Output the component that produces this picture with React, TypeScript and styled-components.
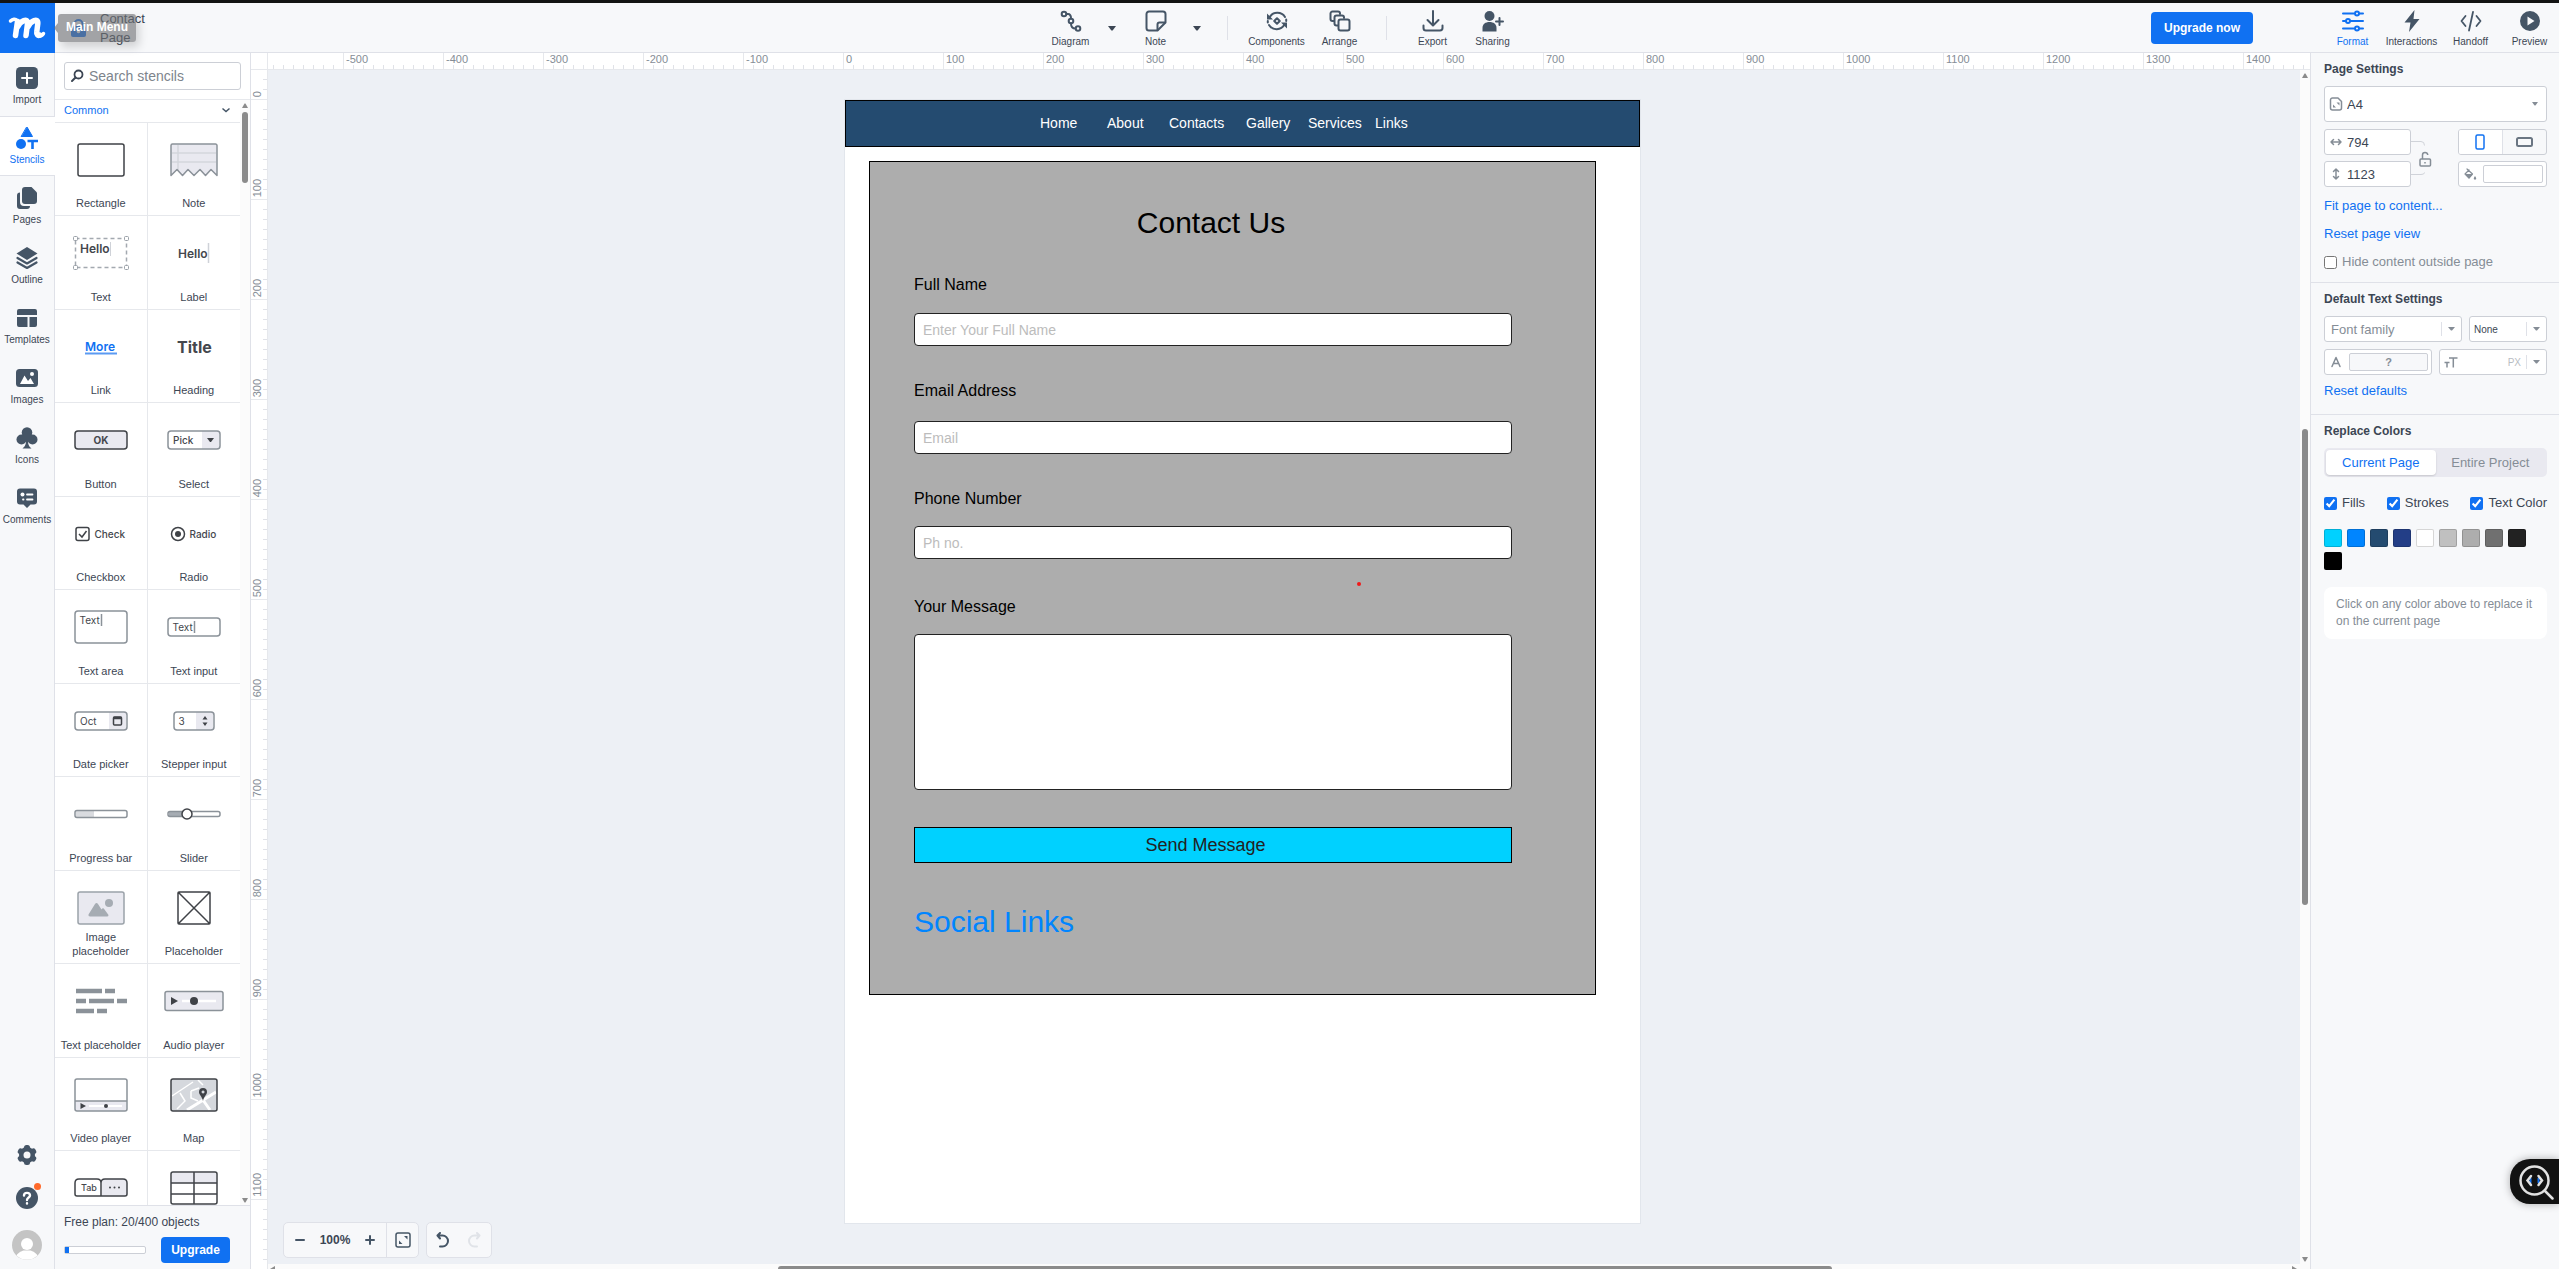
import React from "react";
import styled, { createGlobalStyle } from "styled-components";

const color = {
  ink: "#3c4654",
  icon: "#455566",
  blue: "#1071f2",
  line: "#dfe1e8",
  soft: "#f7f8fa",
  muted: "#858d96",
  field: "#cccfd6",
};

const GlobalStyle = createGlobalStyle`
  *, *::before, *::after { box-sizing: border-box; }
  body {
    margin: 0;
    font-family: "Liberation Sans", Arial, sans-serif;
    color: ${color.ink};
    background: ${color.soft};
  }
  button, input, select, textarea { font-family: inherit; color: inherit; margin: 0; }
  button { border: 0; padding: 0; background: none; cursor: pointer; }
  svg { display: block; flex: none; }
`;

const Shell = styled.div`
  display: flex;
  flex-direction: column;
  height: 100vh;
  overflow: hidden;
`;

/* ---------- header ---------- */

const Header = styled.header`
  position: relative;
  z-index: 2;
  display: grid;
  grid-template-columns: 1fr auto 1fr;
  height: 53px;
  flex: none;
  border-top: 3px solid #131313;
  border-bottom: 1px solid ${color.line};
  background: ${color.soft};
`;

const HeaderStart = styled.div`
  display: flex;
`;

const LogoButton = styled.button`
  width: 55px;
  height: 50px;
  background: ${color.blue};
`;

const ProjectName = styled.div`
  display: flex;
  align-items: center;
  gap: 14px;
  padding-left: 16px;
  font-size: 13px;
  line-height: 19px;
  span { width: 50px; }
`;

const Tooltip = styled.div`
  position: absolute;
  left: 58px;
  top: 11px;
  height: 28px;
  padding: 0 8px;
  border-radius: 3px;
  background: rgba(110, 112, 115, 0.62);
  box-shadow: 3px 5px 10px rgba(0, 0, 0, 0.16);
  color: #fff;
  font-size: 12px;
  font-weight: 700;
  line-height: 27px;
  white-space: nowrap;
  &::before {
    content: "";
    position: absolute;
    left: -4px;
    top: 9px;
    border: 5px solid transparent;
    border-left: 0;
    border-right: 4px solid rgba(110, 112, 115, 0.62);
  }
`;

const Toolbar = styled.div`
  display: flex;
  padding-left: 4px;
`;

const ToolGroup = styled.div<{ $gap: number }>`
  display: flex;
  gap: ${(p) => p.$gap}px;
`;

const Tool = styled.button<{ $width?: number; $active?: boolean }>`
  display: flex;
  flex-direction: column;
  align-items: center;
  gap: 4px;
  width: ${(p) => p.$width ?? 60}px;
  padding-top: 7px;
  font-size: 10px;
  line-height: 12px;
  color: ${(p) => (p.$active ? color.blue : color.ink)};
  svg { color: ${(p) => (p.$active ? color.blue : color.icon)}; }
`;

const CaretButton = styled.button`
  display: flex;
  align-items: center;
  justify-content: center;
  width: 22px;
`;

const Separator = styled.span<{ $space: number }>`
  width: 1px;
  height: 24px;
  margin: 13px ${(p) => p.$space}px 0;
  background: ${color.line};
`;

const HeaderEnd = styled.div`
  display: flex;
  justify-content: flex-end;
`;

const PrimaryButton = styled.button<{ $width: number; $height: number }>`
  width: ${(p) => p.$width}px;
  height: ${(p) => p.$height}px;
  border-radius: 4px;
  background: ${color.blue};
  color: #fff;
  font-size: 12px;
  font-weight: 700;
`;

const UpgradeSlot = styled.div`
  padding: 9px 70px 0 0;
`;

/* ---------- left rail ---------- */

const Body = styled.div`
  display: flex;
  flex: 1;
  min-height: 0;
`;

const Rail = styled.nav`
  display: flex;
  flex-direction: column;
  width: 55px;
  flex: none;
  padding: 3px 0 9px;
  background: linear-gradient(${color.line}, ${color.line}) right / 1px 100% no-repeat ${color.soft};
`;

const RailItem = styled.button<{ $active?: boolean }>`
  display: flex;
  flex-direction: column;
  align-items: center;
  gap: 5px;
  height: 60px;
  padding: 10px 1px 0 0;
  border-top: 1px solid ${(p) => (p.$active ? color.line : "transparent")};
  border-bottom: 1px solid ${(p) => (p.$active ? color.line : "transparent")};
  background: ${(p) => (p.$active ? "#fff" : "none")};
  color: ${(p) => (p.$active ? color.blue : color.ink)};
  font-size: 10px;
  line-height: 12px;
  svg { color: ${(p) => (p.$active ? color.blue : color.icon)}; }
`;

const RailFoot = styled.div`
  display: flex;
  flex-direction: column;
  align-items: center;
  gap: 21px;
  margin-top: auto;
  padding-right: 1px;
  color: ${color.icon};
`;

const HelpButton = styled.button`
  position: relative;
  &::after {
    content: "";
    position: absolute;
    top: -4px;
    right: -3px;
    width: 7px;
    height: 7px;
    border-radius: 50%;
    background: #ff6a2b;
  }
`;

/* ---------- stencils ---------- */

const Stencils = styled.aside`
  display: flex;
  flex-direction: column;
  width: 196px;
  flex: none;
  border-right: 1px solid ${color.line};
  background: #fff;
`;

const SearchArea = styled.div`
  height: 47px;
  padding: 9px;
  border-bottom: 1px solid #e6e8ec;
`;

const SearchBox = styled.label`
  display: flex;
  align-items: center;
  gap: 5px;
  height: 28px;
  padding: 0 5px;
  border: 1px solid ${color.field};
  border-radius: 3px;
  input {
    width: 100%;
    min-width: 0;
    padding: 0;
    border: 0;
    outline: 0;
    font-size: 14px;
    &::placeholder { color: #7d848c; opacity: 1; }
  }
`;

const StencilScroll = styled.div`
  display: flex;
  flex: 1;
  min-height: 0;
`;

const StencilList = styled.div`
  flex: 1;
  overflow: hidden;
`;

const CategoryButton = styled.button`
  display: flex;
  align-items: center;
  justify-content: space-between;
  width: 100%;
  height: 23px;
  padding: 0 9px 2px;
  border-bottom: 1px solid #e6e8ec;
  color: ${color.blue};
  font-size: 11px;
`;

const StencilGrid = styled.div`
  display: grid;
  grid-template-columns: 1fr 1fr;
  grid-auto-rows: 93px 94px;
`;

const StencilCell = styled.button`
  display: flex;
  flex-direction: column;
  align-items: center;
  padding: 17px 0 5px;
  border-bottom: 1px solid #e6e8ec;
  font-size: 11px;
  line-height: 14px;
  &:nth-child(odd) { border-right: 1px solid #e6e8ec; }
  span { max-width: 84px; margin-top: auto; }
  svg text { font-family: Inter, sans-serif; fill: #44474d; }
`;

const VScroll = styled.div`
  display: flex;
  flex-direction: column;
  align-items: center;
  width: 10px;
  flex: none;
  padding: 3px 0 2px;
  background: #fbfbfb;
  color: #8b8b8b;
`;

const VThumb = styled.div<{ $offset: string; $length: string }>`
  width: 6px;
  height: ${(p) => p.$length};
  margin-top: ${(p) => p.$offset};
  margin-bottom: auto;
  border-radius: 3px;
  background: #8b8b8b;
`;

const PlanFooter = styled.div`
  height: 64px;
  padding: 8px 20px 0 9px;
  border-top: 1px solid ${color.line};
  background: ${color.soft};
  font-size: 12px;
  line-height: 16px;
`;

const PlanRow = styled.div`
  display: flex;
  align-items: center;
  justify-content: space-between;
  margin-top: 7px;
`;

const Meter = styled.div`
  width: 82px;
  height: 8px;
  border: 1px solid ${color.field};
  border-radius: 2px;
  background: #fff;
  div { height: 100%; background: ${color.blue}; }
`;

/* ---------- workspace ---------- */

const Workspace = styled.main`
  display: grid;
  flex: 1;
  min-width: 0;
  grid-template-columns: 17px 1fr 10px;
  grid-template-rows: 17px 1fr 5px;
`;

const Corner = styled.div`
  border-right: 1px solid #e6e8ec;
  border-bottom: 1px solid #e6e8ec;
  background: #fff;
`;

const RulerX = styled.div`
  display: flex;
  grid-column: 2 / 4;
  overflow: hidden;
  border-bottom: 1px solid #e6e8ec;
  background: #fff;
`;

const MarkX = styled.div`
  width: 100px;
  flex: none;
  padding-left: 2px;
  border-left: 1px solid #e6e8ec;
  background: repeating-linear-gradient(90deg, transparent 0 9px, #e0e2e8 9px 10px) left bottom / 100% 4px no-repeat;
  color: ${color.muted};
  font-size: 11px;
  line-height: 12px;
`;

const LeadX = styled.div`
  width: 75px;
  flex: none;
  background: repeating-linear-gradient(90deg, transparent 0 5px, #e0e2e8 5px 6px, transparent 6px 10px) left bottom / 100% 4px no-repeat;
`;

const RulerY = styled.div`
  grid-row: 2 / 4;
  overflow: hidden;
  border-right: 1px solid #e6e8ec;
  background: #fff;
`;

const MarkY = styled.div<{ $height: number }>`
  display: flex;
  align-items: flex-end;
  height: ${(p) => p.$height}px;
  padding-bottom: 2px;
  border-bottom: 1px solid #e6e8ec;
  background: repeating-linear-gradient(0deg, transparent 0 9px, #e0e2e8 9px 10px) right bottom / 4px 100% no-repeat;
  color: ${color.muted};
  font-size: 11px;
  line-height: 12px;
  span { writing-mode: vertical-rl; transform: rotate(180deg); }
`;

const Canvas = styled.div`
  position: relative;
  overflow: hidden;
  padding: 30px 0 0 577px;
  background: #edf0f5;
`;

const HScroll = styled.div`
  display: flex;
  grid-column: 2 / 4;
  padding: 2px 13px 0 2px;
  overflow: hidden;
  background: #fbfbfb;
  color: #8b8b8b;
`;

const HThumb = styled.div`
  width: 52%;
  height: 6px;
  margin: 0 auto 0 503px;
  border-radius: 3px;
  background: #8b8b8b;
`;

const CanvasTools = styled.div`
  position: absolute;
  left: 15px;
  bottom: 6px;
  display: flex;
  gap: 7px;
`;

const ToolBox = styled.div`
  display: flex;
  align-items: center;
  height: 36px;
  border: 1px solid ${color.line};
  border-radius: 5px;
  background: ${color.soft};
`;

const SmallButton = styled.button<{ $divided?: boolean }>`
  display: flex;
  align-items: center;
  justify-content: center;
  width: 32px;
  height: 34px;
  color: ${color.icon};
  border-left: ${(p) => (p.$divided ? `1px solid ${color.line}` : "0")};
`;

const ZoomValue = styled.output`
  width: 38px;
  text-align: center;
  font-size: 12px;
  font-weight: 700;
`;

/* ---------- artboard ---------- */

const Artboard = styled.article`
  position: relative;
  width: 795px;
  height: 1123px;
  outline: 1px solid #e2e6ec;
  background: #fff;
  color: #000;
`;

const SiteNav = styled.nav`
  display: grid;
  grid-template-columns: 67px 62px 77px 62px 67px auto;
  justify-content: start;
  align-items: center;
  height: 47px;
  padding: 0 0 2px 194px;
  border: 1px solid #000;
  background: #244b70;
  a { color: #fff; font-size: 14px; text-decoration: none; }
`;

const ContactForm = styled.form`
  display: flex;
  flex-direction: column;
  width: 727px;
  height: 834px;
  margin: 14px 0 0 24px;
  padding: 43px 83px 0 44px;
  border: 1px solid #000;
  background: #adadad;
`;

const FormTitle = styled.h1`
  margin: 0 0 35px;
  padding-right: 4px;
  font-size: 30px;
  line-height: 36px;
  font-weight: 400;
  text-align: center;
`;

const Field = styled.div<{ $gap: number; $after: number }>`
  display: flex;
  flex-direction: column;
  gap: ${(p) => p.$gap}px;
  margin-bottom: ${(p) => p.$after}px;
  label { font-size: 16px; line-height: 18px; }
  input, textarea {
    width: 100%;
    height: 33px;
    padding: 0 8px;
    border: 1px solid #222;
    border-radius: 4px;
    outline: 0;
    background: #fff;
    font-size: 14px;
    &::placeholder { color: #bcbcbc; opacity: 1; }
  }
  textarea { height: 156px; resize: none; }
`;

const SendButton = styled.button`
  height: 36px;
  padding-right: 15px;
  border: 1px solid #000;
  background: #00d1ff;
  color: #222;
  font-size: 18px;
`;

const SocialTitle = styled.h2`
  margin: 41px 0 0;
  font-size: 30px;
  line-height: 36px;
  font-weight: 400;
  color: #0085ff;
`;

const Pointer = styled.span`
  position: absolute;
  left: 512px;
  top: 482px;
  width: 4px;
  height: 4px;
  border-radius: 50%;
  background: #f01818;
`;

/* ---------- format panel ---------- */

const Panel = styled.aside`
  width: 249px;
  flex: none;
  border-left: 1px solid ${color.line};
  background: ${color.soft};
`;

const Section = styled.section<{ $last?: boolean }>`
  display: flex;
  flex-direction: column;
  padding: 8px 12px 0 13px;
  border-bottom: ${(p) => (p.$last ? "0" : `1px solid ${color.line}`)};
`;

const SectionTitle = styled.h2`
  margin: 0 0 9px;
  font-size: 12px;
  line-height: 16px;
  font-weight: 700;
`;

const ControlRow = styled.div`
  display: flex;
  justify-content: space-between;
  margin-bottom: 7px;
`;

const Control = styled.div<{ $width?: number; $height?: number }>`
  display: flex;
  align-items: center;
  width: ${(p) => (p.$width ? `${p.$width}px` : "100%")};
  height: ${(p) => p.$height ?? 26}px;
  padding: 0 0 0 4px;
  border: 1px solid ${color.field};
  border-radius: 3px;
  background: #fff;
  color: ${color.muted};
  input, select {
    flex: 1;
    width: 100%;
    min-width: 0;
    padding: 0 0 0 4px;
    border: 0;
    outline: 0;
    appearance: none;
    background: none;
    font-size: 13px;
    color: ${color.ink};
    &::placeholder { color: ${color.muted}; opacity: 1; }
  }
`;

const FillControl = styled(Control)`
  grid-column: 3;
`;

const SmallSelect = styled.select`
  && { font-size: 10px; padding-left: 0; }
`;

const PlainInput = styled.input`
  && { padding-left: 2px; }
`;

const Unit = styled.span`
  padding-right: 5px;
  font-size: 10px;
  color: #b9bdc3;
`;

const DropMark = styled.button<{ $plain?: boolean }>`
  display: flex;
  flex: none;
  align-items: center;
  justify-content: center;
  width: ${(p) => (p.$plain ? 23 : 20)}px;
  height: 14px;
  border-left: ${(p) => (p.$plain ? "0" : `1px solid ${color.line}`)};
`;

const SizeGrid = styled.div`
  display: grid;
  grid-template-columns: 87px 1fr 89px;
  grid-template-rows: 26px 26px;
  row-gap: 6px;
  margin-top: 7px;
`;

const RatioButton = styled.button`
  grid-row: 1 / 3;
  grid-column: 2;
  justify-self: start;
`;

const Orientation = styled.div`
  display: flex;
  border: 1px solid ${color.field};
  border-radius: 3px;
  overflow: hidden;
`;

const OrientationButton = styled.button<{ $active?: boolean }>`
  display: flex;
  flex: 1;
  align-items: center;
  justify-content: center;
  background: ${(p) => (p.$active ? "#fff" : "none")};
  color: ${(p) => (p.$active ? color.blue : "#6b7683")};
  & + & { border-left: 1px solid ${color.line}; }
`;

const ColorWell = styled.button<{ $width: number; $fill: string }>`
  width: ${(p) => p.$width}px;
  height: 18px;
  margin: 0 3px 0 auto;
  border: 1px solid ${color.field};
  border-radius: 2px;
  background: ${(p) => p.$fill};
  color: ${color.muted};
  font-size: 11px;
  font-weight: 700;
`;

const TextLink = styled.a`
  align-self: flex-start;
  color: ${color.blue};
  font-size: 13px;
  line-height: 16px;
  margin-bottom: 12px;
  text-decoration: none;
`;

const Links = styled.div`
  display: flex;
  flex-direction: column;
  padding-top: 11px;
`;

const ResetSlot = styled.div`
  display: flex;
  height: 32px;
  padding-top: 1px;
`;

const Check = styled.label<{ $muted?: boolean }>`
  display: flex;
  align-items: center;
  gap: 5px;
  font-size: 13px;
  line-height: 16px;
  color: ${(p) => (p.$muted ? color.muted : color.ink)};
  input {
    width: 13px;
    height: 13px;
    accent-color: ${color.blue};
  }
`;

const HideSlot = styled.div`
  padding-bottom: 12px;
`;

const Segments = styled.div`
  display: flex;
  height: 29px;
  padding: 2px;
  border-radius: 5px;
  background: #e9e9f0;
`;

const Segment = styled.button<{ $active?: boolean }>`
  flex: 1;
  border-radius: 4px;
  background: ${(p) => (p.$active ? "#fff" : "none")};
  box-shadow: ${(p) => (p.$active ? "0 1px 2px rgba(0, 0, 0, 0.15)" : "none")};
  color: ${(p) => (p.$active ? color.blue : color.muted)};
  font-size: 13px;
`;

const CheckRow = styled.div`
  display: flex;
  justify-content: space-between;
  margin: 18px 0;
`;

const Swatches = styled.div`
  display: flex;
  flex-wrap: wrap;
  gap: 5px;
`;

const Swatch = styled.button<{ $fill: string }>`
  width: 18px;
  height: 18px;
  border: 1px solid rgba(0, 0, 0, 0.16);
  border-radius: 2px;
  background: ${(p) => p.$fill};
`;

const Hint = styled.p`
  margin: 17px 0 0;
  padding: 9px 12px;
  border-radius: 8px;
  background: #fff;
  color: ${color.muted};
  font-size: 12px;
  line-height: 17px;
`;

const Inspector = styled.button`
  position: fixed;
  right: 0;
  bottom: 65px;
  display: flex;
  align-items: center;
  width: 49px;
  height: 45px;
  padding-left: 8px;
  border-radius: 20px 0 0 20px;
  background: #121212;
  box-shadow: 0 0 8px rgba(0, 0, 0, 0.3);
`;

/* ---------- drawings ---------- */

const Icon = ({ size = 22, children }: { size?: number; children: React.ReactNode }) => (
  <svg width={size} height={size} viewBox={`0 0 ${size} ${size}`} fill="none" stroke="currentColor" strokeWidth="2" strokeLinecap="round" strokeLinejoin="round" aria-hidden="true">
    {children}
  </svg>
);

const Caret = ({ up = false, width = 8, height = 5 }) => (
  <svg width={width} height={height} viewBox="0 0 8 5" preserveAspectRatio="none" fill="currentColor" aria-hidden="true">
    <path d={up ? "M0 5h8L4.6.5h-1.2z" : "M0 0h8L4.6 4.5h-1.2z"} />
  </svg>
);

const solid = { fill: "currentColor", stroke: "none" };

const glyphs = {
  diagram: (
    <>
      <circle cx="4" cy="4" r="2.3" /><circle cx="11" cy="11" r="2.3" /><circle cx="18" cy="18.500" r="2.3" />
      <path d="M6.500 4h1.500c2.400 0 3 1.600 3 4.500M11 13.500c0 3.500 1 5 4.500 5" />
    </>
  ),
  note: (
    <>
      <path d="M12 20.500H4A2.500 2.500 0 0 1 1.500 18V4A2.500 2.500 0 0 1 4 1.500h14A2.500 2.500 0 0 1 20.500 4v8.500L12.500 20.500Z" />
      <path d="M12.500 20v-5.500a2 2 0 0 1 2-2H20" />
    </>
  ),
  components: (
    <>
      <path d="M3.500 7.500A9 9 0 0 1 19 7M18.500 14.500A9 9 0 0 1 3 15M1.800 11v1.500M20.200 11V9.500" />
      <path {...solid} d="M1 3.500v6h6zM21 18.500v-6h-6z" />
      <path d="m11 8.200 2.800 2.800-2.800 2.800L8.200 11z" />
    </>
  ),
  arrange: (
    <>
      <path d="M4.500 11H3.500A2 2 0 0 1 1.500 9V3.500a2 2 0 0 1 2-2H9a2 2 0 0 1 2 2v.5" />
      <path d="M8.500 15.500h-1A2 2 0 0 1 5.500 13.500V7.500a2 2 0 0 1 2-2H13a2 2 0 0 1 2 2v.5" />
      <rect x="9.500" y="9.500" width="11" height="11" rx="2" />
    </>
  ),
  export: <path d="M11 1v14M5.500 10l5.500 5.500 5.500-5.500M1.500 15.500V18a2.500 2.500 0 0 0 2.500 2.500h14a2.500 2.500 0 0 0 2.500-2.500v-2.500" />,
  sharing: (
    <>
      <g {...solid}><circle cx="7.500" cy="6" r="5" /><path d="M0.500 21.500v-3.500c0-4 3-6 7-6s7 2 7 6v3.500z" /></g>
      <path d="M17.500 8v7M14 11.500h7" />
    </>
  ),
  format: (
    <>
      <path d="M1 3.500h11M17.500 3.500h3.500M1 11h2.500M8.500 11H21M1 18.500h11M17.500 18.500h3.500" />
      <circle cx="15" cy="3.500" r="2" /><circle cx="6" cy="11" r="2" /><circle cx="15" cy="18.500" r="2" />
    </>
  ),
  bolt: <path {...solid} d="M13.500 0 3.500 12.500h6L8 22 18.500 9H12.500z" />,
  code: <path strokeWidth="1.800" d="M5.500 6 1.500 11l4 5M16.500 6l4 5-4 5M13 2 9 20.500" />,
  preview: <path {...solid} fillRule="evenodd" d="M11 1a10 10 0 1 0 0 20 10 10 0 0 0 0-20ZM8.500 6.500 15.500 11l-7 4.500z" />,
  plus: (
    <>
      <rect {...solid} width="22" height="22" rx="4.500" /><path stroke="#fff" d="M11 6v10M6 11h10" />
    </>
  ),
  stencils: (
    <>
      <g {...solid}><path d="M11 0l5.500 9.500h-11z" stroke="currentColor" strokeWidth="1" /><circle cx="5" cy="17" r="5" /></g>
      <path strokeWidth="2.600" strokeLinecap="butt" d="M11.500 14h10.500M16.500 14v8.500" />
    </>
  ),
  pages: (
    <>
      <path {...solid} d="M4 5.500v9.500a4 4 0 0 0 4 4h6a3 3 0 0 1-3 3H4a3 3 0 0 1-3-3v-10.500a3 3 0 0 1 3-3z" />
      <path {...solid} d="M9 0h6.500L21 5.500V14a3 3 0 0 1-3 3H9a3 3 0 0 1-3-3V3a3 3 0 0 1 3-3z" />
    </>
  ),
  outline: (
    <>
      <path {...solid} d="M11 0 21.500 6.500 11 13 .5 6.500z" />
      <path strokeWidth="2.200" d="M1.500 11 11 16.500 20.500 11M1.500 15.500 11 21l9.500-5.500" />
    </>
  ),
  templates: (
    <g {...solid}>
      <path d="M3 2h16a2 2 0 0 1 2 2v4H1V4a2 2 0 0 1 2-2zM1 10h10.500v10H3a2 2 0 0 1-2-2zM13.500 10H21v8a2 2 0 0 1-2 2h-5.500z" />
    </g>
  ),
  images: (
    <>
      <rect {...solid} y="2" width="22" height="18" rx="3.500" />
      <path fill="#fff" stroke="none" d="M4 17 8.500 8.500 12 14l2.500-3 3.500 6z" /><circle cx="16" cy="7" r="2" fill="#fff" stroke="none" />
    </>
  ),
  club: (
    <g {...solid}>
      <circle cx="11" cy="5.500" r="5.300" /><circle cx="5.500" cy="12.500" r="5" /><circle cx="16.500" cy="12.500" r="5" />
      <path d="M8 8h6v6H8zM10 13h2c0 4 .5 6 3.500 8.500h-9C9.500 19 10 17 10 13z" />
    </g>
  ),
  comments: (
    <>
      <path {...solid} d="M4 1.500h14a3 3 0 0 1 3 3v10a3 3 0 0 1-3 3h-3.500L11 21l-3.500-3.500H4a3 3 0 0 1-3-3v-10a3 3 0 0 1 3-3z" />
      <path stroke="#fff" strokeWidth="1.800" d="M11 7.500h5.500M11 12.500h5.500M7 12.500h.5" /><circle cx="6.500" cy="7.500" r="2" fill="#fff" stroke="none" />
    </>
  ),
  gear: (
    <>
      <g {...solid}>
        <circle cx="11" cy="11" r="8" />
        {[0, 60, 120, 180, 240, 300].map((a) => <rect key={a} x="8" y="1" width="6" height="6" rx="2.500" transform={`rotate(${a} 11 11)`} />)}
      </g>
      <circle cx="11" cy="11" r="3.500" fill={color.soft} stroke="none" />
    </>
  ),
  help: (
    <>
      <circle {...solid} cx="11" cy="11" r="11" />
      <path stroke="#fff" strokeWidth="2.400" d="M8 8.500c0-3.500 6-3.500 6 0 0 2-3 2-3 4.500M11 16.300v.2" />
    </>
  ),
};

const LogoMark = () => (
  <svg width="55" height="50" viewBox="0 0 55 50" fill="none" stroke="#fff" strokeLinecap="round" strokeLinejoin="round" aria-hidden="true">
    <path strokeWidth="3.500" d="M10.500 18c2-2 5-2.500 6.500-.5" />
    <path strokeWidth="5.500" d="M17.500 18.500 15.500 32.500M17.500 24c3-6.500 10.500-9.500 10-3.500L26 32.500M27.800 24c3-6.500 10.500-9.500 10-3.500L36.800 28.500c-.5 3 1 4.500 3 3.500" />
    <path strokeWidth="3.500" d="M39 33c2 0 3.500-.8 4.500-2.500" />
  </svg>
);

const dark = "#3f4247";
const grey = "#8b9299";
const pale = "#e9e9f0";

const drawings: Record<string, React.ReactNode> = {
  Rectangle: <rect x="7" y="4" width="46" height="32" rx="2" fill="#fff" stroke={dark} strokeWidth="1.500" />,
  Note: (
    <g stroke={grey} strokeWidth="1.500">
      <path fill={pale} stroke="none" d="M7 4h46v32l-6-6-5 6-6-6-6 6-6-6-5 6-6-6-6 6z" />
      <path stroke="#d3d6db" d="M8 13h44M8 22h44M14 5v26" />
      <path d="M7 35.500V5.500A1.500 1.500 0 0 1 8.500 4h43A1.500 1.500 0 0 1 53 5.500v30l-6-6-5.500 6-5.500-6-6 6-6-6-5.500 6-5.500-6z" strokeLinejoin="round" />
    </g>
  ),
  Text: (
    <>
      <rect x="4.500" y="5.500" width="51" height="29" stroke="#a3a9b0" strokeWidth="1.500" strokeDasharray="4 3" />
      {[[2.5, 3.5], [53.5, 3.5], [2.5, 32.5], [53.5, 32.5]].map(([x, y]) => <rect key={`${x}-${y}`} x={x} y={y} width="4" height="4" rx="1" fill="#fff" stroke="#9aa0a8" />)}
      <text x="9" y="20" fontSize="12" fontWeight="600">Hello</text>
      <path d="M39.500 9v14" stroke="#cfd2d8" />
    </>
  ),
  Label: (
    <>
      <text x="14" y="25" fontSize="12" fontWeight="600">Hello</text><path d="M44.500 10v20" stroke="#cfd2d8" strokeWidth="1.500" />
    </>
  ),
  Link: (
    <>
      <text x="14" y="24" fontSize="12" fontWeight="600" style={{ fill: color.blue }}>More</text><path d="M14 26.500h32" stroke="#5b9af2" strokeWidth="2" />
    </>
  ),
  Heading: <text x="13" y="26" fontSize="16" fontWeight="700">Title</text>,
  Button: (
    <>
      <rect x="4" y="11" width="52" height="18" rx="3" fill={pale} stroke={dark} strokeWidth="1.500" />
      <text x="30" y="24" fontSize="10" fontWeight="700" textAnchor="middle">OK</text>
    </>
  ),
  Select: (
    <>
      <path fill={pale} d="M38 11h17v18H38z" /><rect x="4" y="11" width="52" height="18" rx="3" stroke={grey} strokeWidth="1.500" />
      <text x="9" y="24" fontSize="10" fontWeight="500">Pick</text><path fill={dark} d="M43 18h7l-3 4h-1z" />
    </>
  ),
  Checkbox: (
    <>
      <rect x="5" y="13.500" width="13" height="13" rx="2" stroke={dark} strokeWidth="1.500" /><path d="m8 20 3 3 4.500-6" stroke={dark} strokeWidth="1.500" />
      <text x="23.500" y="24" fontSize="10" fontWeight="500">Check</text>
    </>
  ),
  Radio: (
    <>
      <circle cx="14" cy="20" r="6.500" stroke={dark} strokeWidth="1.500" /><circle cx="14" cy="20" r="3" fill={dark} />
      <text x="25.500" y="24" fontSize="10" fontWeight="500">Radio</text>
    </>
  ),
  "Text area": (
    <>
      <rect x="4" y="4" width="52" height="32" rx="3" stroke={grey} strokeWidth="1.500" />
      <text x="8.500" y="17" fontSize="10">Text</text><path d="M30.500 7v12" stroke={grey} strokeWidth="1.500" />
    </>
  ),
  "Text input": (
    <>
      <rect x="4" y="11" width="52" height="18" rx="3" stroke={grey} strokeWidth="1.500" />
      <text x="8.500" y="24" fontSize="10">Text</text><path d="M30.500 14v12" stroke={grey} strokeWidth="1.500" />
    </>
  ),
  "Date picker": (
    <>
      <path fill={pale} d="M38 11h17v18H38z" /><rect x="4" y="11" width="52" height="18" rx="3" stroke={grey} strokeWidth="1.500" />
      <text x="9" y="24" fontSize="10">Oct</text>
      <rect x="42.500" y="16" width="8" height="8" rx="1" stroke={dark} strokeWidth="1.500" /><path d="M42.500 17h8" stroke={dark} strokeWidth="2.500" />
    </>
  ),
  "Stepper input": (
    <>
      <path fill={pale} d="M32 11h17v18H32z" /><rect x="10" y="11" width="40" height="18" rx="3" stroke={grey} strokeWidth="1.500" />
      <text x="14.500" y="24" fontSize="10">3</text><path fill={dark} d="M38.500 18.500h5l-2.500-3.500zM38.500 21.500h5L41 25z" />
    </>
  ),
  "Progress bar": (
    <>
      <path fill="#d9dbdf" d="M5 17h18v6H5z" /><rect x="4" y="16.500" width="52" height="7" rx="2" stroke={grey} strokeWidth="1.500" />
    </>
  ),
  Slider: (
    <>
      <path fill="#a6acb3" d="M5 17h18v6H5z" /><rect x="4" y="17.500" width="52" height="5" rx="2" stroke={grey} strokeWidth="1.500" />
      <circle cx="23" cy="20" r="5" fill="#fff" stroke={dark} strokeWidth="1.500" />
    </>
  ),
  "Image placeholder": (
    <>
      <rect x="7" y="4" width="46" height="32" rx="2" fill={pale} stroke="#9ba2a9" strokeWidth="1.500" />
      <path fill="#a6acb3" d="M17.500 26.500 24 16q1.500-2 3 0l3.500 5.500q1.500-2.500 3 0l4 5.500q0 1.500-1.500 1.500H19q-2 0-1.500-2z" /><circle cx="38" cy="15" r="4" fill="#a6acb3" />
    </>
  ),
  Placeholder: <path d="M15 4h30q1 0 1 1v30q0 1-1 1H15q-1 0-1-1V5q0-1 1-1zM14.500 4.500l31 31M45.500 4.500l-31 31" fill="#fff" stroke={dark} strokeWidth="1.500" />,
  "Text placeholder": <path d="M5 10h26M34 10h10M5 20h10M18 20h25M46 20h10M5 30h18M26 30h10" stroke={grey} strokeWidth="4.500" />,
  "Audio player": (
    <>
      <rect x="1" y="10.500" width="58" height="19" rx="2" fill={pale} stroke={grey} strokeWidth="1.500" />
      <path d="M18 20h34" stroke="#fff" strokeWidth="2.500" /><path fill={dark} d="M7 16v8l7-4z" /><circle cx="30" cy="20" r="4" fill={dark} />
    </>
  ),
  "Video player": (
    <>
      <path fill={pale} d="M4 26h52v10H4z" /><rect x="4" y="4" width="52" height="32" rx="2" stroke={grey} strokeWidth="1.500" />
      <path d="M4 26h52" stroke={grey} strokeWidth="1.500" /><path d="M18 31h33" stroke="#fff" strokeWidth="2" />
      <path fill={dark} d="M9.500 28v6l5.500-3z" /><circle cx="35" cy="31" r="2" fill={dark} />
    </>
  ),
  Map: (
    <>
      <rect x="7" y="4" width="46" height="32" rx="2" fill="#d5d8dd" />
      <path stroke="#fff" strokeWidth="1.500" d="M8 21 29 7M16 18l5 8-8 8M27 16v7l7 3M27 16l8-3M34 5l5 5" /><path stroke="#fff" strokeWidth="3" d="M23 35l13-8 16-10M39 25l7 10" />
      <rect x="7" y="4" width="46" height="32" rx="2" stroke={dark} strokeWidth="1.500" />
      <path fill={dark} fillRule="evenodd" d="M39 13a4 4 0 0 1 4 4c0 3-3 4-4 9-1-5-4-6-4-9a4 4 0 0 1 4-4zm0 2.500a1.500 1.500 0 1 0 .1 0z" />
    </>
  ),
  Tabs: (
    <>
      <path fill={pale} d="M31 28V14q0-3 3-3h19q3 0 3 3v14z" />
      <path stroke={dark} strokeWidth="1.500" d="M6 28q-2 0-2-2V15q0-4 4-4h18q4 0 4 4v13M30 15q0-4 4-4h18q4 0 4 4v11q0 2-2 2H6" />
      <text x="10" y="23" fontSize="9" fontWeight="500">Tab</text><path stroke={dark} strokeWidth="2" strokeLinecap="round" strokeDasharray="0 4.500" d="M39 19.500h10" />
    </>
  ),
  Table: (
    <>
      <rect x="7" y="4" width="46" height="32" rx="2" fill="#fff" /><path fill={pale} d="M8 5h44v10H8z" />
      <path stroke={dark} strokeWidth="1.500" d="M7 15h46M7 26h46M30 4v32" /><rect x="7" y="4" width="46" height="32" rx="2" stroke={dark} strokeWidth="1.500" />
    </>
  ),
};

/* ---------- data ---------- */

const railItems: [string, keyof typeof glyphs][] = [
  ["Import", "plus"], ["Stencils", "stencils"], ["Pages", "pages"], ["Outline", "outline"],
  ["Templates", "templates"], ["Images", "images"], ["Icons", "club"], ["Comments", "comments"],
];
const panelTabs: [string, keyof typeof glyphs][] = [
  ["Format", "format"], ["Interactions", "bolt"], ["Handoff", "code"], ["Preview", "preview"],
];
const swatches = ["#00d1ff", "#0085ff", "#244b70", "#233e87", "#ffffff", "#c0c0c0", "#adadad", "#707070", "#222222", "#000000"];
const marksX = Array.from({ length: 20 }, (_, i) => -500 + i * 100);
const marksY = Array.from({ length: 12 }, (_, i) => i * 100);
const fields = [
  { id: "name", label: "Full Name", hint: "Enter Your Full Name", gap: 19, after: 36 },
  { id: "email", label: "Email Address", hint: "Email", gap: 21, after: 36 },
  { id: "phone", label: "Phone Number", hint: "Ph no.", gap: 18, after: 39 },
];

const unlabelled = ["Tabs", "Table"];

function TopBar() {
  return (
    <Header>
      <HeaderStart>
        <LogoButton aria-label="Main menu"><LogoMark /></LogoButton>
        <ProjectName>
          <svg width="15" height="18" viewBox="0 0 15 18" fill="none" aria-hidden="true">
            <rect y="7" width="15" height="11" rx="2" fill={color.blue} /><path d="M3.500 8V5a4 4 0 0 1 8 0v3" stroke={color.blue} strokeWidth="2" />
            <circle cx="7.500" cy="12.500" r="1.800" fill="#fff" />
          </svg>
          <span>Contact Page</span>
        </ProjectName>
      </HeaderStart>
      <Toolbar>
        <ToolGroup $gap={3}>
          <ToolGroup $gap={0}>
            <Tool><Icon>{glyphs.diagram}</Icon>Diagram</Tool>
            <CaretButton aria-label="Diagram options"><Caret /></CaretButton>
          </ToolGroup>
          <ToolGroup $gap={0}>
            <Tool><Icon>{glyphs.note}</Icon>Note</Tool>
            <CaretButton aria-label="Note options"><Caret /></CaretButton>
          </ToolGroup>
        </ToolGroup>
        <Separator $space={19} />
        <ToolGroup $gap={3}>
          <Tool><Icon>{glyphs.components}</Icon>Components</Tool>
          <Tool><Icon>{glyphs.arrange}</Icon>Arrange</Tool>
        </ToolGroup>
        <Separator $space={16} />
        <ToolGroup $gap={0}>
          <Tool><Icon>{glyphs.export}</Icon>Export</Tool>
          <Tool><Icon>{glyphs.sharing}</Icon>Sharing</Tool>
        </ToolGroup>
      </Toolbar>
      <HeaderEnd>
        <UpgradeSlot><PrimaryButton $width={102} $height={32}>Upgrade now</PrimaryButton></UpgradeSlot>
        {panelTabs.map(([name, glyph], i) => (
          <Tool key={name} $width={59} $active={i === 0}><Icon>{glyphs[glyph]}</Icon>{name}</Tool>
        ))}
      </HeaderEnd>
      <Tooltip role="tooltip">Main Menu</Tooltip>
    </Header>
  );
}

function LeftRail() {
  return (
    <Rail>
      {railItems.map(([name, glyph]) => (
        <RailItem key={name} $active={name === "Stencils"}><Icon>{glyphs[glyph]}</Icon>{name}</RailItem>
      ))}
      <RailFoot>
        <button aria-label="Settings"><Icon>{glyphs.gear}</Icon></button>
        <HelpButton aria-label="Help"><Icon>{glyphs.help}</Icon></HelpButton>
        <button aria-label="Account">
          <svg width="30" height="30" viewBox="0 0 30 30" aria-hidden="true">
            <circle cx="15" cy="15" r="15" fill="#c4c4c4" /><circle cx="15" cy="14" r="6" fill="#fff" />
            <path fill="#fff" d="M4.500 25.500c2-3.500 5-4 7-5h7c2 1 5 1.500 7 5a15 15 0 0 1-21 0z" />
          </svg>
        </button>
      </RailFoot>
    </Rail>
  );
}

function StencilPanel() {
  return (
    <Stencils>
      <SearchArea>
        <SearchBox>
          <Icon size={14}><circle cx="8.500" cy="5.500" r="4" strokeWidth="1.800" /><path d="M5.500 8.500 2 12" /></Icon>
          <input type="search" placeholder="Search stencils" aria-label="Search stencils" />
        </SearchBox>
      </SearchArea>
      <StencilScroll>
        <StencilList>
          <CategoryButton>
            Common
            <svg width="10" height="6" viewBox="0 0 10 6" fill="none" stroke={color.icon} strokeWidth="1.500" aria-hidden="true"><path d="m1.500 1.500 3.500 3 3.500-3" /></svg>
          </CategoryButton>
          <StencilGrid>
            {Object.entries(drawings).map(([name, drawing]) => (
              <StencilCell key={name} aria-label={name}>
                <svg width="60" height="40" viewBox="0 0 60 40" fill="none" aria-hidden="true">{drawing}</svg>
                {!unlabelled.includes(name) && <span>{name}</span>}
              </StencilCell>
            ))}
          </StencilGrid>
        </StencilList>
        <VScroll><Caret up width={6} /><VThumb $offset="4px" $length="71px" /><Caret width={6} /></VScroll>
      </StencilScroll>
      <PlanFooter>
        Free plan: 20/400 objects
        <PlanRow>
          <Meter><div style={{ width: `${(20 / 400) * 100}%` }} /></Meter>
          <PrimaryButton $width={69} $height={26}>Upgrade</PrimaryButton>
        </PlanRow>
      </PlanFooter>
    </Stencils>
  );
}

function ContactPage() {
  return (
    <Artboard>
      <SiteNav>
        {["Home", "About", "Contacts", "Gallery", "Services", "Links"].map((name) => <a key={name} href={`#${name}`}>{name}</a>)}
      </SiteNav>
      <ContactForm>
        <FormTitle>Contact Us</FormTitle>
        {fields.map((f) => (
          <Field key={f.id} $gap={f.gap} $after={f.after}>
            <label htmlFor={f.id}>{f.label}</label>
            <input id={f.id} placeholder={f.hint} />
          </Field>
        ))}
        <Field $gap={18} $after={37}>
          <label htmlFor="message">Your Message</label>
          <textarea id="message" />
        </Field>
        <SendButton type="button">Send Message</SendButton>
        <SocialTitle>Social Links</SocialTitle>
      </ContactForm>
      <Pointer />
    </Artboard>
  );
}

function Editor() {
  return (
    <Workspace>
      <Corner />
      <RulerX><LeadX />{marksX.map((m) => <MarkX key={m}>{m}</MarkX>)}</RulerX>
      <RulerY>
        {marksY.map((m) => <MarkY key={m} $height={m === 0 ? 30 : 100}><span>{m}</span></MarkY>)}
        <MarkY $height={100} />
      </RulerY>
      <Canvas>
        <ContactPage />
        <CanvasTools>
          <ToolBox>
            <SmallButton aria-label="Zoom out"><Icon size={12}><path d="M2 6h8" /></Icon></SmallButton>
            <ZoomValue>100%</ZoomValue>
            <SmallButton aria-label="Zoom in"><Icon size={12}><path d="M2 6h8M6 2v8" /></Icon></SmallButton>
            <SmallButton $divided aria-label="Fit to screen">
              <Icon size={16}><rect x="1" y="1" width="14" height="14" rx="2" strokeWidth="1.500" /><path {...solid} d="M9 4h3.500v3.500zM4 8.500V12h3.500z" /></Icon>
            </SmallButton>
          </ToolBox>
          <ToolBox>
            <SmallButton aria-label="Undo"><Icon size={16}><path d="M5 1 2.500 3.500 5 6.500M3 3.500h4.500a5.200 5.200 0 0 1 0 11H5" /></Icon></SmallButton>
            <SmallButton aria-label="Redo" disabled>
              <Icon size={16}><path stroke="#e0e3e8" d="M10 1l2.500 2.500L10 6.500M12 3.500H7.500a5.200 5.200 0 0 0 0 11H10" /></Icon>
            </SmallButton>
          </ToolBox>
        </CanvasTools>
      </Canvas>
      <VScroll><Caret up width={6} /><VThumb $offset="351px" $length="40%" /><Caret width={6} /></VScroll>
      <HScroll>
        <svg width="5" height="6" viewBox="0 0 5 6" fill="currentColor" aria-hidden="true"><path d="M5 0v6L0 3z" /></svg>
        <HThumb />
        <svg width="5" height="6" viewBox="0 0 5 6" fill="currentColor" aria-hidden="true"><path d="M0 0v6l5-3z" /></svg>
      </HScroll>
    </Workspace>
  );
}

function FormatPanel() {
  return (
    <Panel>
      <Section>
        <SectionTitle>Page Settings</SectionTitle>
        <Control $height={36}>
          <Icon size={14}>
            <path strokeWidth="1.500" d="M3.500 1H9l3.500 3.500V11A2 2 0 0 1 10.500 13H3.500A2 2 0 0 1 1.500 11V3A2 2 0 0 1 3.500 1z" />
            <path {...solid} d="M7.500 5.500h3v3zM4 7.500v3h3z" />
          </Icon>
          <select aria-label="Page size" defaultValue="A4"><option>A4</option></select>
          <DropMark as="span" $plain><Caret width={6} height={4} /></DropMark>
        </Control>
        <SizeGrid>
          <Control>
            <Icon size={14}><path strokeWidth="1.500" d="M2 7h10M4.500 4.500 2 7l2.500 2.500M9.500 4.500 12 7 9.500 9.500" /></Icon>
            <input aria-label="Width" defaultValue="794" />
          </Control>
          <RatioButton aria-label="Lock ratio">
            <svg width="22" height="58" viewBox="0 0 22 58" fill="none" aria-hidden="true">
              <path stroke="#d0d3d9" d="M0 12.500h10q3.500 0 3.500 4M0 45.500h10q3.500 0 3.500-2" />
              <rect x="9" y="30" width="10.500" height="7" rx="1" stroke={color.muted} strokeWidth="1.500" />
              <path stroke={color.muted} strokeWidth="1.500" d="M11.500 30v-4q0-2.500 2.500-2.500t2.800 2.500M14 33v1.500" />
            </svg>
          </RatioButton>
          <Orientation>
            <OrientationButton $active aria-label="Portrait"><Icon size={18}><rect x="4" y="2" width="8" height="14" rx="1.500" strokeWidth="1.500" /></Icon></OrientationButton>
            <OrientationButton aria-label="Landscape"><Icon size={18}><rect x="1" y="5" width="15" height="8" rx="1.500" /></Icon></OrientationButton>
          </Orientation>
          <Control>
            <Icon size={14}><path strokeWidth="1.500" d="M7 2v10M4.500 4.500 7 2l2.500 2.500M4.500 9.500 7 12l2.500-2.500" /></Icon>
            <input aria-label="Height" defaultValue="1123" />
          </Control>
          <FillControl>
            <Icon size={14}><path strokeWidth="1.200" d="M4 2l5.500 5L6 11 2 7l4-4" /><path {...solid} d="M2 7h7.500L6 11.500zM12 9q2.500 3.500 0 3.500T12 9z" /></Icon>
            <ColorWell $width={60} $fill="#fff" aria-label="Page fill" />
          </FillControl>
        </SizeGrid>
        <Links>
          <TextLink href="#fit">Fit page to content...</TextLink>
          <TextLink href="#view">Reset page view</TextLink>
        </Links>
        <HideSlot><Check $muted><input type="checkbox" />Hide content outside page</Check></HideSlot>
      </Section>
      <Section>
        <SectionTitle>Default Text Settings</SectionTitle>
        <ControlRow>
          <Control $width={138}>
            <PlainInput aria-label="Font family" placeholder="Font family" />
            <DropMark aria-label="Show fonts"><Caret width={7} height={4} /></DropMark>
          </Control>
          <Control $width={78}>
            <SmallSelect aria-label="Text style" defaultValue="None"><option>None</option></SmallSelect>
            <DropMark as="span"><Caret width={7} height={4} /></DropMark>
          </Control>
        </ControlRow>
        <ControlRow>
          <Control $width={108}>
            <Icon size={14}><path strokeWidth="1.500" d="M3 11.500 7 2.500l4 9M4.500 8.500h5" /></Icon>
            <ColorWell $width={79} $fill={color.soft} aria-label="Text color">?</ColorWell>
          </Control>
          <Control $width={108}>
            <Icon size={14}><path strokeWidth="1.500" strokeLinecap="butt" d="M5 3h8.500M9.300 3v9.500M.5 7.500h5M3 7.500v5" /></Icon>
            <input aria-label="Font size" />
            <Unit>PX</Unit>
            <DropMark aria-label="Show sizes"><Caret width={7} height={4} /></DropMark>
          </Control>
        </ControlRow>
        <ResetSlot><TextLink href="#defaults">Reset defaults</TextLink></ResetSlot>
      </Section>
      <Section $last>
        <SectionTitle>Replace Colors</SectionTitle>
        <Segments>
          <Segment $active>Current Page</Segment>
          <Segment>Entire Project</Segment>
        </Segments>
        <CheckRow>
          {["Fills", "Strokes", "Text Color"].map((name) => (
            <Check key={name}><input type="checkbox" defaultChecked />{name}</Check>
          ))}
        </CheckRow>
        <Swatches>{swatches.map((c) => <Swatch key={c} $fill={c} aria-label={c} />)}</Swatches>
        <Hint>Click on any color above to replace it on the current page</Hint>
      </Section>
    </Panel>
  );
}

export default function App() {
  return (
    <Shell>
      <GlobalStyle />
      <TopBar />
      <Body>
        <LeftRail />
        <StencilPanel />
        <Editor />
        <FormatPanel />
      </Body>
      <Inspector aria-label="Inspect">
        <svg width="36" height="40" viewBox="0 0 36 40" fill="none" strokeLinecap="round" aria-hidden="true">
          <circle cx="16.500" cy="18.500" r="14" stroke="#e2e2e2" strokeWidth="2.500" /><path d="M27 29l7.500 7.500" stroke="#e2e2e2" strokeWidth="2.500" />
          <path d="M12.500 16.500v4M20.500 16.500v4" stroke={color.blue} strokeWidth="2" /><path d="M13 14 9.500 18.500 13 23M20.500 14l3.500 4.500-3.500 4.500" stroke="#e2e2e2" strokeWidth="2.500" />
        </svg>
      </Inspector>
    </Shell>
  );
}
